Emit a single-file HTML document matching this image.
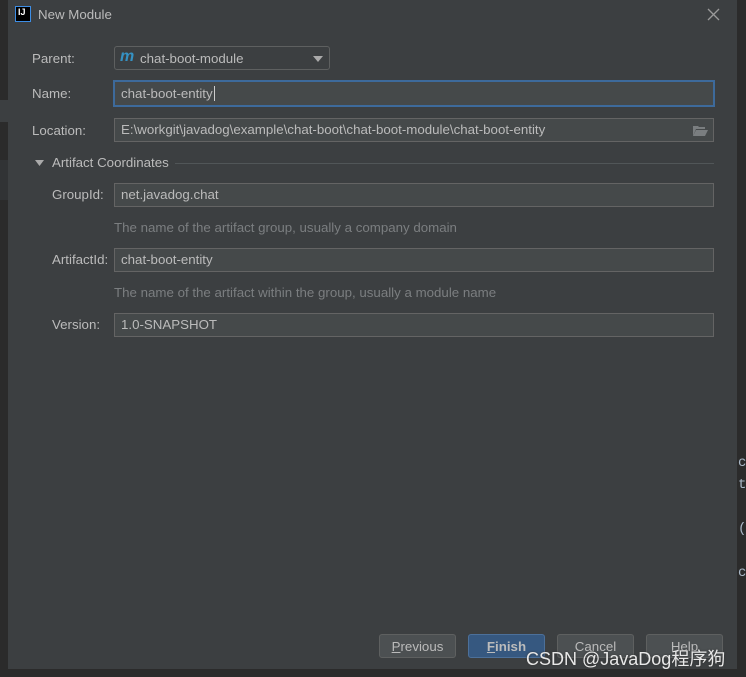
<!DOCTYPE html>
<html><head><style>
*{margin:0;padding:0;box-sizing:border-box}
body{width:746px;height:677px;background:#2b2b2b;position:relative;overflow:hidden;font-family:"Liberation Sans","Noto Sans CJK SC",sans-serif;font-size:13.3px;color:#bbbbbb}
.dlg{position:absolute;left:8px;top:0;width:729px;height:669px;background:#3c3f41}
.a{position:absolute;white-space:nowrap}
.f{position:absolute;background:#45494a;border:1px solid #646464;padding-left:6px;line-height:22px;color:#bbbbbb}
.btn{position:absolute;top:634px;width:77px;height:24px;border:1px solid #5e6060;border-radius:3px;background:#4c5052;text-align:center;line-height:23px;color:#bbbbbb}
.hint{color:#7b7e80}
</style></head><body>
<div class="a" style="left:0;top:100px;width:8px;height:22px;background:#3c3f41"></div>
<div class="a" style="left:0;top:160px;width:8px;height:40px;background:#313335"></div>
<div class="dlg"></div>
<div class="a" style="left:15px;top:6px;width:16px;height:16px;background:#000;border:1px solid #3d8ee6;color:#fff;font-size:9px;font-weight:bold;line-height:10px;padding-left:2px">IJ</div>
<div class="a" style="left:38px;top:7px;font-size:13.3px">New Module</div>
<svg class="a" style="left:707px;top:8px" width="13" height="13"><path d="M1 1L12 12M12 1L1 12" stroke="#9a9a9a" stroke-width="1.3"/></svg>
<div class="a" style="left:32px;top:51px">Parent:</div>
<div class="a" style="left:114px;top:46px;width:216px;height:24px;border:1px solid #5e6060;border-radius:3px;background:#3c3f41"></div>
<div class="a" style="left:120px;top:48px;color:#3592c4;font-weight:bold;font-style:italic;font-size:16px">m</div>
<div class="a" style="left:140px;top:51px">chat-boot-module</div>
<svg class="a" style="left:313px;top:56px" width="10" height="6"><path d="M0 0H10L5 6Z" fill="#aaa"/></svg>
<div class="a" style="left:32px;top:86px">Name:</div>
<div class="f" style="left:113px;top:80px;width:602px;height:27px;border:2px solid #3d6a9b;line-height:24px;padding-left:6px">chat-boot-entity<span style="border-left:1px solid #ccc;margin-left:1px"></span></div>
<div class="a" style="left:32px;top:123px">Location:</div>
<div class="f" style="left:114px;top:118px;width:600px;height:24px">E:\workgit\javadog\example\chat-boot\chat-boot-module\chat-boot-entity</div>
<svg class="a" style="left:693px;top:125px" width="15" height="11"><path d="M0 1H5L6 2H12V4H3L0 11Z" fill="#7a7e80"/><path d="M3 5H15L12 11H0Z" fill="#7a7e80"/></svg>
<svg class="a" style="left:35px;top:160px" width="9" height="6"><path d="M0 0H9L4.5 6Z" fill="#aaa"/></svg>
<div class="a" style="left:52px;top:155px">Artifact Coordinates</div>
<div class="a" style="left:175px;top:163px;width:539px;height:1px;background:#515658"></div>
<div class="a" style="left:52px;top:187px">GroupId:</div>
<div class="f" style="left:114px;top:183px;width:600px;height:24px">net.javadog.chat</div>
<div class="a hint" style="left:114px;top:220px">The name of the artifact group, usually a company domain</div>
<div class="a" style="left:52px;top:252px">ArtifactId:</div>
<div class="f" style="left:114px;top:248px;width:600px;height:24px">chat-boot-entity</div>
<div class="a hint" style="left:114px;top:285px">The name of the artifact within the group, usually a module name</div>
<div class="a" style="left:52px;top:317px">Version:</div>
<div class="f" style="left:114px;top:313px;width:600px;height:24px">1.0-SNAPSHOT</div>
<div class="btn" style="left:379px"><u>P</u>revious</div>
<div class="btn" style="left:468px;background:#365880;border-color:#4c709a;font-weight:bold"><u>F</u>inish</div>
<div class="btn" style="left:557px">Cancel</div>
<div class="btn" style="left:646px">Help</div>
<div class="a" style="left:526px;top:645px;font-size:18px;color:#e8e8e8;text-shadow:0 0 2px #333">CSDN @JavaDog程序狗</div>
<div class="a" style="left:738px;top:452px;font-family:'Liberation Mono',monospace;font-size:14px;line-height:22px;color:#a9b7c6">c<br>t<br><br>(<br><br>c</div>
</body></html>
